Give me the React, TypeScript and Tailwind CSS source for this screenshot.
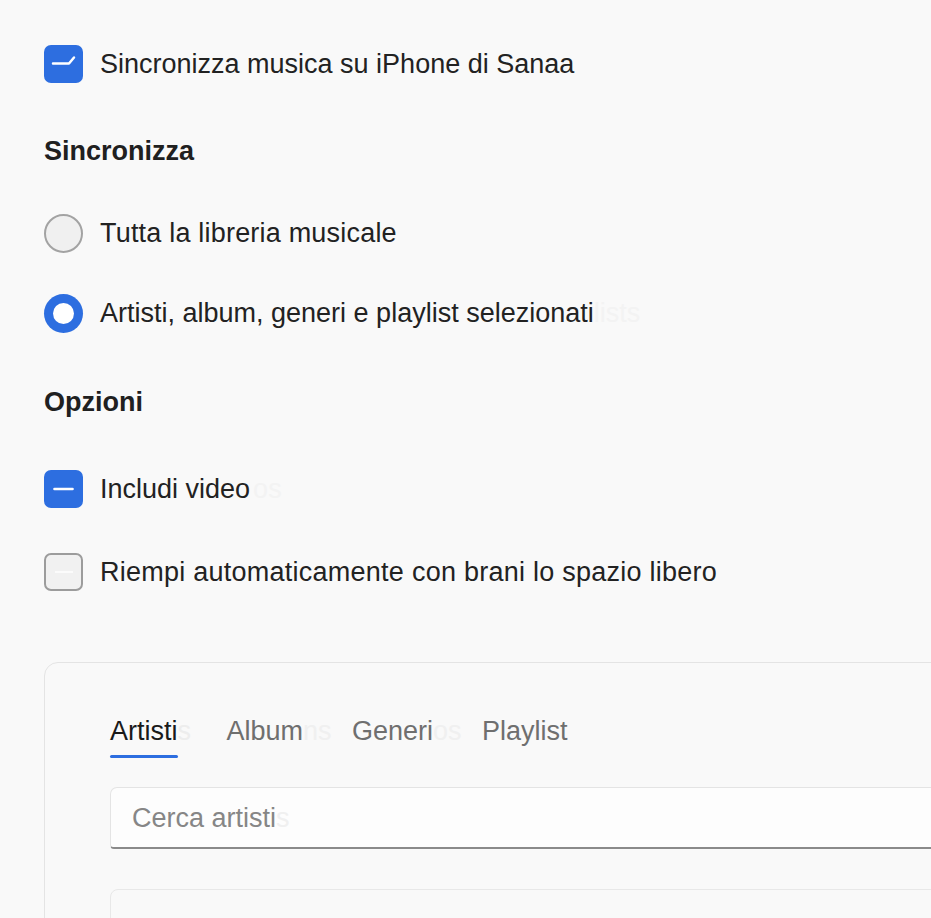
import React from "react";

const font = { fontFamily: '"Liberation Sans", Arial, Helvetica, sans-serif' };

function Ghost({ children, className = "" }: { children: React.ReactNode; className?: string }) {
  return (
    <span className={"absolute left-full top-0 whitespace-nowrap " + className}>{children}</span>
  );
}

function CheckedBox({ partial }: { partial?: boolean }) {
  return (
    <div className="w-[39px] h-[38px] rounded-[7px] bg-[#2d6ee0] flex items-center justify-center shrink-0">
      <svg width="39" height="38" viewBox="0 0 39 38">
        {partial ? (
          <path d="M9 18.5 L25 18.5 L30 12.5" fill="none" stroke="#fff" strokeWidth="2.5" strokeLinecap="round" strokeLinejoin="round" />
        ) : (
          <path d="M10.5 19 L28.5 19" fill="none" stroke="#fff" strokeWidth="2.6" strokeLinecap="round" />
        )}
      </svg>
    </div>
  );
}

function EmptyBox() {
  return (
    <div className="w-[39px] h-[38px] rounded-[7px] border-2 border-[#9c9c9c] bg-[#f1f1f1] flex items-center justify-center shrink-0">
      <div className="w-[18px] h-[2px] bg-[#fbfbfb]" />
    </div>
  );
}

export default function App() {
  return (
    <div className="w-[931px] h-[918px] overflow-hidden bg-[#f9f9f9] text-[#222222]" style={font}>
      <div className="pl-[44px] pt-[45px] flex flex-col">
        <div className="h-[38px] flex items-center gap-[17px]">
          <CheckedBox partial />
          <span className="text-[27px] leading-[32px]">Sincronizza musica su iPhone di Sanaa</span>
        </div>

        <div className="mt-[52px] h-[32px] flex items-center">
          <span className="text-[27px] leading-[32px] font-bold text-[#202020]">Sincronizza</span>
        </div>

        <div className="mt-[47px] h-[38px] flex items-center gap-[17px]">
          <div className="w-[39px] h-[39px] rounded-full border-2 border-[#a3a3a3] bg-[#f0f0f0] shrink-0" />
          <span className="text-[27px] leading-[32px] tracking-[0.2px]">Tutta la libreria musicale</span>
        </div>

        <div className="mt-[42px] h-[38px] flex items-center gap-[17px]">
          <div className="w-[39px] h-[39px] rounded-full bg-[#2d6ee0] flex items-center justify-center shrink-0">
            <div className="w-[21px] h-[21px] rounded-full bg-white" />
          </div>
          <span className="relative text-[27px] leading-[32px]">
            Artisti, album, generi e playlist selezionati
            <Ghost className="text-[#f3f3f3]">lists</Ghost>
          </span>
        </div>

        <div className="mt-[54px] h-[32px] flex items-center">
          <span className="text-[27px] leading-[32px] font-bold text-[#202020]">Opzioni</span>
        </div>

        <div className="mt-[52px] h-[38px] flex items-center gap-[17px]">
          <CheckedBox />
          <span className="relative text-[27px] leading-[32px]">
            Includi video
            <Ghost className="text-[#f3f3f3] pl-[3px]">os</Ghost>
          </span>
        </div>

        <div className="mt-[45px] h-[38px] flex items-center gap-[17px]">
          <EmptyBox />
          <span className="text-[27px] leading-[32px] tracking-[0.25px]">Riempi automaticamente con brani lo spazio libero</span>
        </div>

        <div className="mt-[71px] w-[1000px] h-[300px] rounded-tl-[14px] border border-[#e4e4e4] bg-[#f9f9f9] pl-[65px] pt-[52px]">
          <div className="flex gap-[49px]">
            <div className="flex flex-col">
              <span className="relative text-[27px] leading-[32px] text-[#1a1a1a]">
                Artisti
                <Ghost className="text-[#ededed]">s</Ghost>
              </span>
              <div className="mt-[8px] h-[3px] bg-[#2d6ee0] rounded-full" />
            </div>
            <span className="relative text-[27px] leading-[32px] text-[#6f6f6f]">
              Album
              <Ghost className="text-[#f0f0f0]">ns</Ghost>
            </span>
            <span className="relative text-[27px] leading-[32px] text-[#6f6f6f]">
              Generi
              <Ghost className="text-[#f0f0f0]">os</Ghost>
            </span>
            <span className="text-[27px] leading-[32px] text-[#6f6f6f]">Playlist</span>
          </div>

          <div className="mt-[29px] h-[62px] rounded-tl-[7px] rounded-bl-[4px] border border-[#e4e4e4] border-b-2 border-b-[#8a8a8a] bg-[#fdfdfd] flex items-center pl-[21px]">
            <span className="relative text-[27px] leading-[32px] text-[#868686]">
              Cerca artisti
              <Ghost className="text-[#f0f0f0]">s</Ghost>
            </span>
          </div>

          <div className="mt-[40px] h-[100px] rounded-tl-[8px] border border-[#e8e8e8] bg-[#f9f9f9]" />
        </div>
      </div>
    </div>
  );
}
